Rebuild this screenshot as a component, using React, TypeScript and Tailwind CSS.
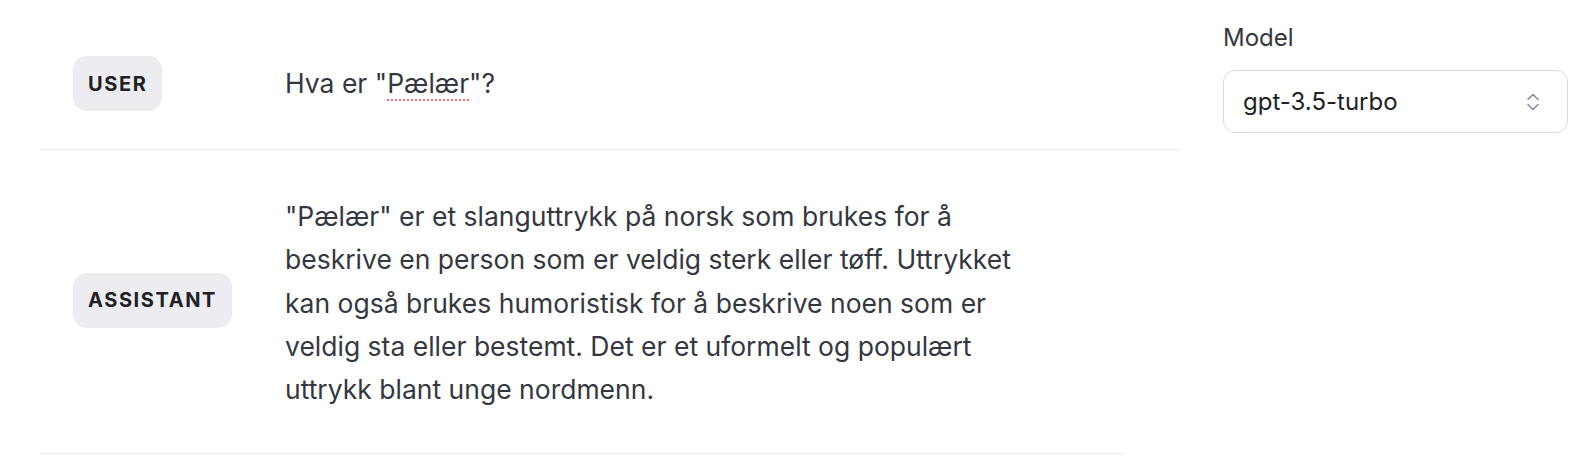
import React from "react";

const Badge: React.FC<{ label: string }> = ({ label }) => (
  <span className="inline-flex h-[55px] items-center rounded-[14px] bg-[#ececf1] px-[15px] text-[20px] font-bold tracking-[0.08em] text-[#202123]">
    {label}
  </span>
);

const Row: React.FC<{ role: string; children: React.ReactNode; className: string; badgeClass?: string }> = ({
  role,
  children,
  className,
  badgeClass = "",
}) => (
  <div className={`flex items-center pl-[33px] border-b border-[#ececf1] ${className}`}>
    <div className={`w-[212px] shrink-0 ${badgeClass}`}>
      <Badge label={role} />
    </div>
    <div className="text-[26.5px] leading-[43.3px] text-[#353740]">{children}</div>
  </div>
);

const App: React.FC = () => {
  return (
    <div
      className="flex h-[468px] w-full bg-white"
      style={{ fontFamily: "Inter, 'Liberation Sans', sans-serif" }}
    >
      {/* Conversation */}
      <div className="ml-[40px] w-[1140px] shrink-0">
        <Row role="USER" className="pt-[56px] pb-[38px]">
          Hva er "
          <span className="underline decoration-dotted decoration-[#f87171] decoration-2 underline-offset-[7px]">Pælær</span>
          "?
        </Row>
        <Row role="ASSISTANT" className="pt-[45px] pb-[42px] mr-[56px]" badgeClass="mb-[6px]">
          "Pælær" er et slanguttrykk på norsk som brukes for å
          <br />
          beskrive en person som er veldig sterk eller tøff. Uttrykket
          <br />
          kan også brukes humoristisk for å beskrive noen som er
          <br />
          veldig sta eller bestemt. Det er et uformelt og populært
          <br />
          uttrykk blant unge nordmenn.
        </Row>
      </div>

      {/* Settings */}
      <div className="ml-[43px] w-[345px] shrink-0 pt-[22px]">
        <div className="text-[24px] leading-[32px] text-[#353740]">Model</div>
        <div className="mt-[16px] flex h-[63px] items-center justify-between rounded-[12px] border border-[#d9d9e3] pl-[19px] pr-[27px]">
          <span className="text-[24px] text-[#202123]">gpt-3.5-turbo</span>
          <svg width="14" height="20" viewBox="0 0 14 20" fill="none" stroke="#8e8ea0" strokeWidth="1.6" strokeLinecap="round" strokeLinejoin="round">
            <path d="M2 7.5 L7 2.5 L12 7.5" />
            <path d="M2 12.5 L7 17.5 L12 12.5" />
          </svg>
        </div>
      </div>
    </div>
  );
};

export default App;
